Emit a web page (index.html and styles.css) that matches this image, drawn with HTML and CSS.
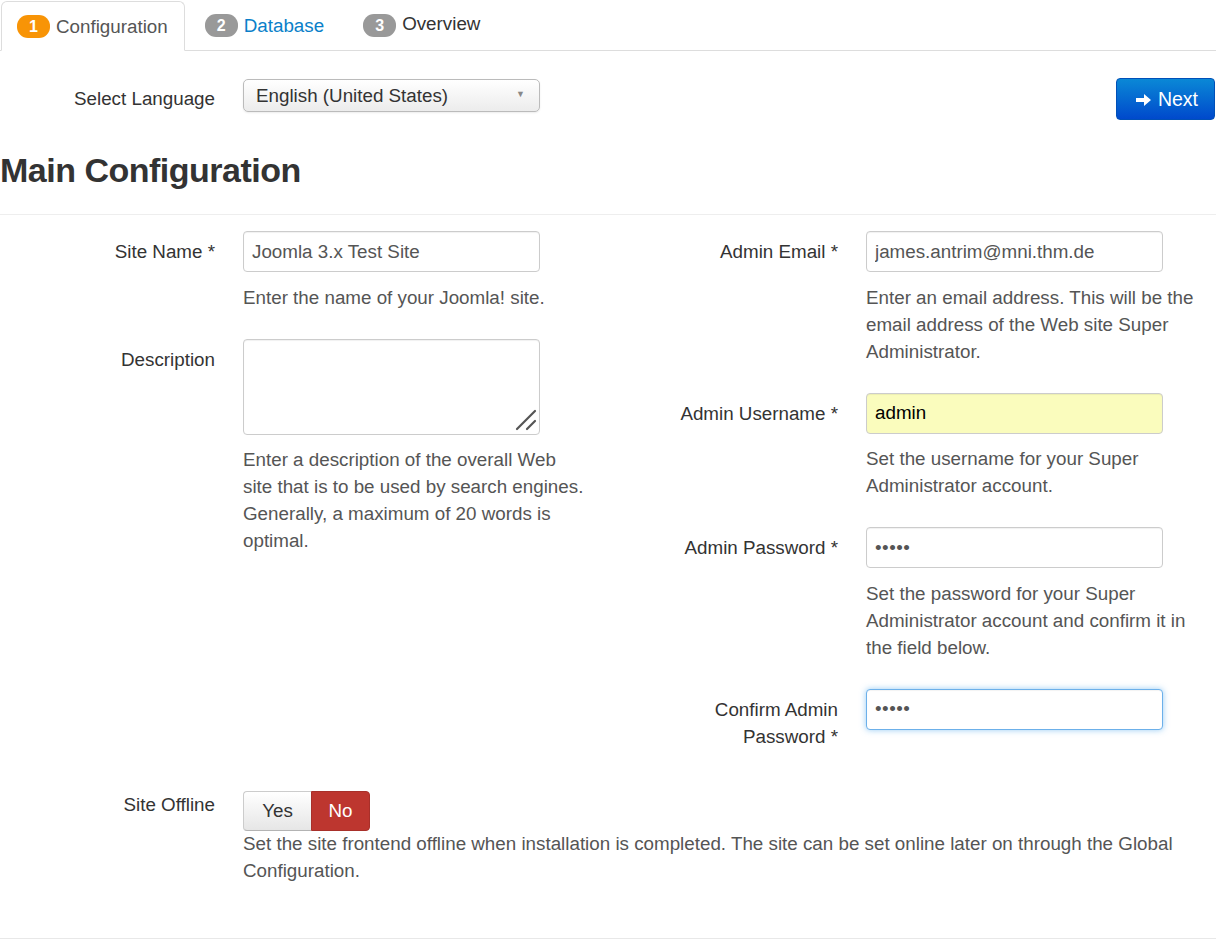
FILE: index.html
```html
<!DOCTYPE html>
<html lang="en">
<head>
<meta charset="utf-8">
<title>Joomla Installation - Configuration</title>
<link rel="stylesheet" href="styles.css">
</head>
<body>
<nav class="tabs">
  <a class="tab active"><span class="badge badge-orange">1</span><span class="tab-text">Configuration</span></a>
  <a class="tab link"><span class="badge">2</span><span class="tab-text">Database</span></a>
  <span class="tab plain"><span class="badge">3</span><span class="tab-text">Overview</span></span>
</nav>

<div class="lang-row">
  <div class="lang-group">
    <label class="label">Select Language</label>
    <div class="select">
      <span>English (United States)</span>
      <span class="caret">&#9660;</span>
    </div>
  </div>
  <button class="btn-next">
    <svg class="arrow" width="15" height="12" viewBox="0 0 15 12"><path d="M0 4h8V0l7 6-7 6V8H0z" fill="#fff"/></svg>
    <span>Next</span>
  </button>
</div>

<h1 class="title">Main Configuration</h1>
<hr class="rule">

<div class="form-cols">
  <div class="col">
    <div class="group">
      <label class="label">Site Name *</label>
      <div class="controls">
        <input class="field" type="text" value="Joomla 3.x Test Site">
        <p class="help">Enter the name of your Joomla! site.</p>
      </div>
    </div>
    <div class="group">
      <label class="label">Description</label>
      <div class="controls">
        <div class="area-wrap">
          <textarea class="field area"></textarea>
          <svg class="grip" width="22" height="22" viewBox="0 0 22 22"><path d="M2 20L20 2M12 20L20 12" stroke="#555" stroke-width="2.2" stroke-linecap="round"/></svg>
        </div>
        <p class="help">Enter a description of the overall Web site that is to be used by search engines. Generally, a maximum of 20 words is optimal.</p>
      </div>
    </div>
  </div>
  <div class="col">
    <div class="group">
      <label class="label">Admin Email *</label>
      <div class="controls">
        <input class="field" type="text" value="james.antrim@mni.thm.de">
        <p class="help">Enter an email address. This will be the email address of the Web site Super Administrator.</p>
      </div>
    </div>
    <div class="group">
      <label class="label">Admin Username *</label>
      <div class="controls">
        <input class="field autofill" type="text" value="admin">
        <p class="help">Set the username for your Super Administrator account.</p>
      </div>
    </div>
    <div class="group">
      <label class="label">Admin Password *</label>
      <div class="controls">
        <input class="field" type="password" value="admin">
        <p class="help">Set the password for your Super Administrator account and confirm it in the field below.</p>
      </div>
    </div>
    <div class="group">
      <label class="label">Confirm Admin<br>Password *</label>
      <div class="controls">
        <input class="field focus" type="password" value="admin">
      </div>
    </div>
  </div>
</div>

<div class="offline-row">
  <label class="label label-tight">Site Offline</label>
  <div class="controls wide">
    <div class="toggle">
      <span class="tbtn yes">Yes</span>
      <span class="tbtn no">No</span>
    </div>
    <p class="help help-tight">Set the site frontend offline when installation is completed. The site can be set online later on through the Global Configuration.</p>
  </div>
</div>

<hr class="rule bottom-rule">
</body>
</html>
```

FILE: styles.css
```css
* { box-sizing: border-box; }

body {
  margin: 0;
  font-family: "Liberation Sans", Arial, sans-serif;
  font-size: 18.8px;
  line-height: 27px;
  color: #333;
  background: #fff;
}

/* Tabs */
.tabs {
  display: flex;
  height: 51px;
  padding-left: 1px;
  border-bottom: 1px solid #ddd;
}
.tab {
  display: flex;
  align-items: center;
  gap: 6px;
  height: 50px;
  padding: 0 16px 0 15px;
  margin-right: 4px;
  border: 1px solid transparent;
  border-radius: 6px 6px 0 0;
  color: #333;
  text-decoration: none;
}
.tab.active {
  margin-top: 1px;
  height: 50px;
  border-color: #ddd;
  border-bottom-color: #fff;
  background: #fff;
  color: #555;
}
.tab.link { color: #0a7fc9; }
.tab.plain { padding-left: 17px; }
.tab.plain .tab-text { margin-top: -3px; }

.badge {
  display: inline-block;
  min-width: 33px;
  height: 23px;
  padding: 0 8px;
  border-radius: 11px;
  background: #999;
  color: #fff;
  font-weight: bold;
  font-size: 16px;
  line-height: 23px;
  text-align: center;
}
.badge-orange { background: #f89406; }

/* Language row */
.lang-row {
  display: flex;
  justify-content: space-between;
  align-items: flex-start;
  padding-top: 27px;
}
.lang-group {
  display: flex;
  align-items: flex-start;
}
.label {
  flex-shrink: 0;
  width: 243px;
  padding-right: 28px;
  padding-top: 7px;
  text-align: right;
  color: #333;
}

.select {
  display: flex;
  justify-content: space-between;
  align-items: center;
  width: 297px;
  height: 33px;
  margin-top: 1px;
  padding: 0 14px 0 12px;
  border: 1px solid #bbb;
  border-radius: 5px;
  background: linear-gradient(#ffffff, #ececec);
  box-shadow: 0 1px 2px rgba(0,0,0,0.08);
  color: #333;
}
.caret {
  font-size: 9px;
  color: #888;
  line-height: 1;
  margin-top: -2px;
}

.btn-next {
  display: flex;
  align-items: center;
  justify-content: center;
  gap: 7px;
  width: 99px;
  height: 42px;
  margin-right: 1px;
  padding: 0 0 0 3px;
  border: 1px solid #0050b8;
  border-radius: 4px;
  background: linear-gradient(#0a88d6, #0049cc);
  color: #fff;
  font-family: inherit;
  font-size: 19.5px;
}
.btn-next .arrow { margin-top: 1px; }

/* Heading */
.title {
  margin: 30px 0 0;
  font-size: 34px;
  line-height: 40px;
  letter-spacing: -0.5px;
  font-weight: bold;
  color: #333;
}
.rule {
  margin: 24px 0 0;
  border: 0;
  border-top: 1px solid #eee;
  height: 0;
}

/* Form */
.form-cols {
  display: grid;
  grid-template-columns: 593px 593px;
  column-gap: 30px;
  padding-top: 16px;
  align-items: start;
}
.group {
  display: flex;
  align-items: flex-start;
  margin-bottom: 28px;
}
.controls { width: 345px; }
.controls.wide { width: 973px; }

.field {
  display: block;
  width: 297px;
  height: 41px;
  margin: 0;
  padding: 0 8px;
  border: 1px solid #ccc;
  border-radius: 4px;
  font-family: inherit;
  font-size: 18.8px;
  color: #555;
  background: #fff;
  box-shadow: inset 0 1px 1px rgba(0,0,0,0.06);
  outline: none;
}
.area-wrap {
  position: relative;
  width: 297px;
  height: 96px;
}
.area {
  height: 96px;
  resize: none;
}
.grip {
  position: absolute;
  right: 3px;
  bottom: 4px;
}
.autofill {
  background: #fafcbd;
  color: #000;
}
.focus {
  border-color: #6cb0ea;
  box-shadow: inset 0 1px 1px rgba(0,0,0,0.05), 0 0 6px rgba(82,168,236,0.6);
}
input[type="password"] { letter-spacing: 0.5px; }

.help {
  margin: 11.5px 0 0;
  color: #555;
}

/* Offline row */
.offline-row {
  display: flex;
  align-items: flex-start;
  margin-top: 13px;
}
.label-tight { padding-top: 0; }
.toggle {
  display: flex;
  height: 40px;
}
.tbtn {
  display: flex;
  align-items: center;
  justify-content: center;
  height: 40px;
}
.yes {
  width: 68px;
  border: 1px solid #ccc;
  border-bottom-color: #b3b3b3;
  border-right: 0;
  border-radius: 4px 0 0 4px;
  background: linear-gradient(#ffffff, #e6e6e6);
  color: #333;
}
.no {
  width: 59px;
  border: 1px solid #a8302a;
  border-radius: 0 4px 4px 0;
  background: #bd362f;
  color: #fff;
}
.help-tight { margin-top: -1px; }

.bottom-rule { margin-top: 54px; border-top-color: #e8e8e8; }
```
